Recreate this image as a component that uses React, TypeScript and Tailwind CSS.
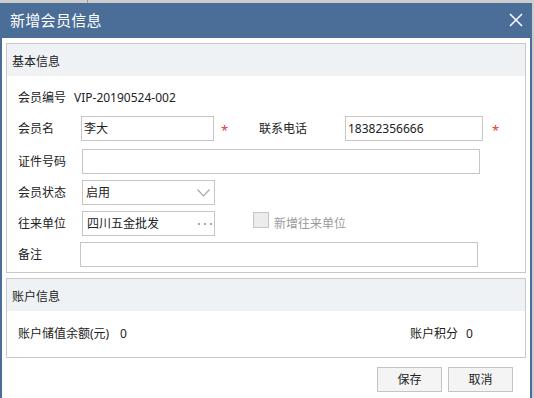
import React from "react";

const font = { fontFamily: '"Noto Sans", "Noto Sans CJK SC", sans-serif' };

function Star() {
  return <span className="text-[#e53935] text-[13px] leading-none">*</span>;
}

export default function App() {
  return (
    <div
      className="relative w-[534px] h-[398px] overflow-hidden bg-[#cdcdcd] text-[12px] text-[#222]"
      style={font}
    >
      <div className="absolute left-[87px] top-0 w-px h-[3px] bg-[#9a9a9a]" />
      <div className="mt-[3px] w-[532px] h-[395px] border-x-2 border-[#4a6e97] bg-white flex flex-col">
        {/* title */}
        <div className="h-[35px] shrink-0 bg-[#4a6e97] flex items-center justify-between pl-[8px] pr-[7px]">
          <span className="text-white text-[15px] tracking-[0.3px]">新增会员信息</span>
          <svg width="14" height="14" viewBox="0 0 14 14" className="mb-[1px]">
            <path d="M1 1 L13 13 M13 1 L1 13" stroke="white" strokeWidth="1.5" />
          </svg>
        </div>
        <div className="pl-[4px] pt-[5px] w-[524px]">
          {/* section 1 */}
          <div className="w-[520px] border border-[#c9c9c9]">
            <div className="h-[32px] bg-[#eef2f5] flex items-center pl-[5px] pt-[3px]">基本信息</div>
            <div className="pl-[11px] pt-[9px] pb-[5px] flex flex-col">
              <div className="h-[25px] flex items-center">
                <span className="w-[56px]">会员编号</span>
                <span>VIP-20190524-002</span>
              </div>
              <div className="h-[25px] mt-[6px] flex items-center">
                <div className="w-[241px] flex items-center">
                  <span className="w-[63px]">会员名</span>
                  <div className="w-[133px] h-[25px] border border-[#c6c6c6] flex items-center pl-[2px]">李大</div>
                  <span className="ml-[7px] mt-[4px]"><Star /></span>
                </div>
                <span className="w-[86px]">联系电话</span>
                <div className="w-[138px] h-[25px] border border-[#c6c6c6] flex items-center pl-[2px]">18382356666</div>
                <span className="ml-[9px] mt-[4px]"><Star /></span>
              </div>
              <div className="h-[25px] mt-[8px] flex items-center">
                <span className="w-[64px]">证件号码</span>
                <div className="w-[398px] h-[25px] border border-[#c6c6c6]" />
              </div>
              <div className="h-[25px] mt-[6px] flex items-center">
                <span className="w-[64px]">会员状态</span>
                <div className="w-[133px] h-[25px] border border-[#c6c6c6] flex items-center justify-between pl-[3px] pr-[4px]">
                  <span>启用</span>
                  <svg width="13" height="8" viewBox="0 0 13 8">
                    <path d="M0.5 0.5 L6.5 6.8 L12.5 0.5" stroke="#a8a8a8" strokeWidth="1.2" fill="none" />
                  </svg>
                </div>
              </div>
              <div className="h-[25px] mt-[6px] flex items-center">
                <span className="w-[64px]">往来单位</span>
                <div className="w-[133px] h-[25px] border border-[#c6c6c6] flex items-center justify-between pl-[4px] pr-[2px]">
                  <span>四川五金批发</span>
                  <span className="flex gap-[4px] items-center">
                    <span className="w-[2px] h-[2px] bg-[#a8a8a8]" />
                    <span className="w-[2px] h-[2px] bg-[#a8a8a8]" />
                    <span className="w-[2px] h-[2px] bg-[#a8a8a8]" />
                  </span>
                </div>
                <span className="ml-[38px] w-[16px] h-[16px] border border-[#c4c4c4] bg-[#ececec] self-start mt-[1px]" />
                <span className="ml-[5px] text-[#9a9a9a]">新增往来单位</span>
              </div>
              <div className="h-[25px] mt-[6px] flex items-center">
                <span className="w-[62px]">备注</span>
                <div className="w-[398px] h-[25px] border border-[#c6c6c6]" />
              </div>
            </div>
          </div>
          {/* section 2 */}
          <div className="mt-[5px] w-[520px] border border-[#c9c9c9]">
            <div className="h-[32px] bg-[#eef2f5] flex items-center pl-[5px] pt-[4px]">账户信息</div>
            <div className="h-[46px] flex items-center pl-[11px]">
              <span className="w-[102px]">账户储值余额(元)</span>
              <span>0</span>
              <span className="ml-[283px] w-[56px]">账户积分</span>
              <span>0</span>
            </div>
          </div>
          <div className="flex justify-end gap-[6px] mt-[9px] pr-[13px]">
            <div className="w-[65px] h-[25px] border border-[#c4c4c4] bg-[#f4f4f4] flex items-center justify-center">保存</div>
            <div className="w-[65px] h-[25px] border border-[#c4c4c4] bg-[#f4f4f4] flex items-center justify-center">取消</div>
          </div>
        </div>
      </div>
    </div>
  );
}
